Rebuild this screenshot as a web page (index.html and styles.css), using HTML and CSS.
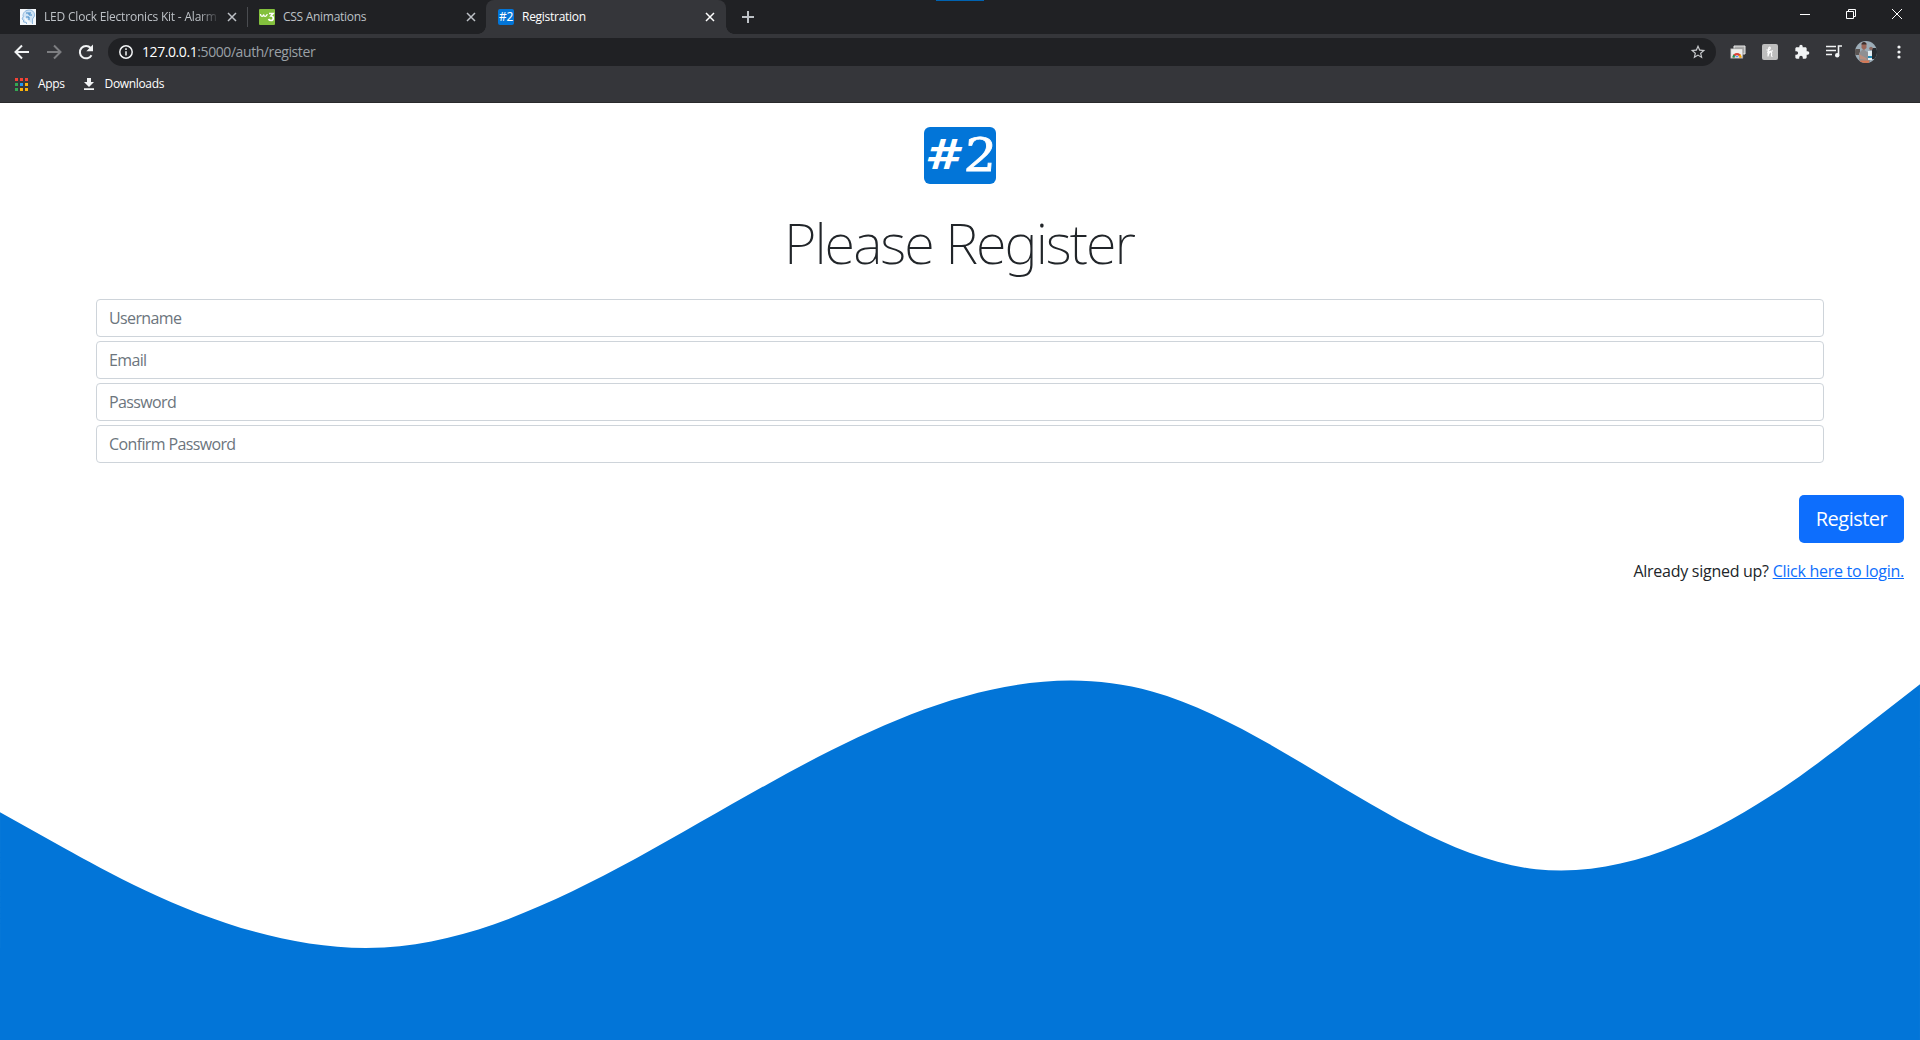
FILE: index.html
```html
<!DOCTYPE html>
<html lang="en">
<head>
<meta charset="utf-8">
<title>Registration</title>
<link rel="stylesheet" href="styles.css">
</head>
<body>
<header class="browser">
  <div class="tabstrip">
    <div class="tab tab-first">
      <svg class="favicon" viewBox="0 0 16 16"><rect width="16" height="16" fill="#f4f8fc"/><path d="M3 7c0-4 3-6 6.500-6S15 4 14.500 7l-2 3v5M3.500 7l-1.500 3 1.500 1v2l3 .5V15" fill="#cfe3f5" stroke="#8fb8de"/><path d="M6 4h3v2h3M6 8h3v3M10 3v2" fill="none" stroke="#3f87c5"/></svg>
      <span class="tab-title fade">LED Clock Electronics Kit - Alarm</span>
      <svg class="close" viewBox="0 0 10 10"><path d="M1 1l8 8M9 1l-8 8"/></svg>
    </div>
    <i class="separator"></i>
    <div class="tab tab-second">
      <svg class="favicon" viewBox="0 0 16 16"><rect width="16" height="16" rx="1" fill="#83c03d"/><path d="M1.500 5c0 3 2.700 3 3.200.5 0 2.500 3 2.500 3.500-.5" fill="none" stroke="#fff" stroke-width="1.300"/><path d="M10 4.500h4L12 7c3 0 3 4.500 0 4.500-1 0-2-.5-2.500-1.500" fill="none" stroke="#fff" stroke-width="1.700"/></svg>
      <span class="tab-title">CSS Animations</span>
      <svg class="close" viewBox="0 0 10 10"><path d="M1 1l8 8M9 1l-8 8"/></svg>
    </div>
    <div class="tab tab-active">
      <span class="favicon brand-icon">#2</span>
      <span class="tab-title">Registration</span>
      <svg class="close" viewBox="0 0 10 10"><path d="M1 1l8 8M9 1l-8 8"/></svg>
    </div>
    <svg class="new-tab" viewBox="0 0 12 12"><path d="M6 0v12M0 6h12"/></svg>
    <div class="window-controls">
      <svg viewBox="0 0 10 10"><path d="M0 5.500h10"/></svg>
      <svg viewBox="0 0 10 10"><path d="M.5 2.500h7v7h-7zM2.500 2.500v-2h7v7h-2"/></svg>
      <svg viewBox="0 0 10 10"><path d="M0 0l10 10M10 0L0 10"/></svg>
    </div>
  </div>
  <div class="toolbar">
    <svg class="nav" viewBox="0 0 16 16"><path d="M15 8H2M8 1.500L1.500 8 8 14.500"/></svg>
    <svg class="nav disabled" viewBox="0 0 16 16"><path d="M1 8h13M8 1.500L14.500 8 8 14.500"/></svg>
    <svg class="nav" viewBox="0 0 16 16"><path d="M13.500 11.200A6.200 6.200 0 1 1 12.700 4"/><path class="solid" d="M15 .5v6.700H8.300z"/></svg>
    <div class="omnibox">
      <svg class="info" viewBox="0 0 14 14"><circle cx="7" cy="7" r="6.200"/><path d="M7 6.200v4.300M7 3.300v1.600"/></svg>
      <span class="url"><b>127.0.0.1</b>:5000/auth/register</span>
      <svg class="star" viewBox="1 1 22 22"><path d="M22 9.240l-7.190-.62L12 2 9.190 8.630 2 9.240l5.460 4.730L5.820 21 12 17.270 18.180 21l-1.630-7.030L22 9.240zM12 15.400l-3.760 2.270 1-4.280-3.320-2.880 4.380-.38L12 6.100l1.710 4.040 4.380.38-3.320 2.880 1 4.280L12 15.400z"/></svg>
    </div>
    <div class="extensions">
      <svg class="ext" viewBox="0 0 16 16"><path d="M4 2h11v8H4z" fill="#aaa" stroke="#e8e8e8"/><path d="M.7 4.700h12.100v9.600H.7z" fill="#eeeeec" stroke="#888" stroke-width=".6"/><path d="M2.500 13.500a4.500 4.500 0 0 1 9 0z" fill="#db4437"/><path d="M2.500 13.500a4.500 4.500 0 0 1 1-3l3.500 3z" fill="#0f9d58"/><path d="M11.500 13.500a4.500 4.500 0 0 0-1-3L7 13.500z" fill="#f4b400"/><path d="M5 13.500a2 2 0 0 1 4 0z" fill="#4285f4" stroke="#fff" stroke-width=".6"/></svg>
      <svg class="ext" viewBox="0 0 16 16"><rect width="16" height="16" rx="2" fill="#bdbdbd"/><path d="M4.500 5.800C7.500 6.500 9 4.500 8 3.200 6.500 2.500 6.200 6 6 12.500c.5-4.500 3.500-5.500 3.700-3.300 0 1.500-.8 3.500.8 3.300M5 8.200l6-1.400" fill="none" stroke="#fff" stroke-width="1.100"/></svg>
      <svg class="ext puzzle" viewBox="0 0 24 24"><path d="M20.500 11H19V7c0-1.100-.9-2-2-2h-4V3.500a2.500 2.500 0 0 0-5 0V5H4c-1.100 0-1.990.9-1.990 2v3.800H3.500a2.700 2.700 0 0 1 0 5.400H2V20c0 1.100.9 2 2 2h3.800v-1.500a2.700 2.700 0 0 1 5.400 0V22H17c1.100 0 2-.9 2-2v-4h1.500a2.500 2.500 0 0 0 0-5z"/></svg>
      <svg class="ext media" viewBox="0 0 16 16"><path d="M0 2.500h10M0 6.500h10M0 10.500h6M16 2h-3.500v9" fill="none" stroke="#f1f3f4" stroke-width="1.600"/><circle cx="11.200" cy="11.200" r="2.200" fill="#f1f3f4"/></svg>
      <svg class="avatar" viewBox="0 0 22 22"><defs><clipPath id="round"><circle cx="11" cy="11" r="11"/></clipPath></defs><g clip-path="url(#round)"><path d="M0 0h22v22H0z" fill="#9dadb8"/><path d="M0 8h5v6H0z" fill="#5a5452"/><path d="M17 7h5v11h-5z" fill="#272b30"/><path d="M4 22V12l4-4 7 5v9z" fill="#8f9093"/><path d="M6.500 3c0-2.500 5-2.500 5 0v4L9 9 6.500 7z" fill="#9b6658"/><path d="M6.500 3.500c0-3.500 5-3.500 5 0z" fill="#3b302f"/><path d="M4 13l7 4 1 2-7-1z" fill="#b98f80"/><path d="M13 10h4v9h-4z" fill="#e2edf2"/><path d="M13 15h4v2h-4z" fill="#278bb5"/><circle cx="16" cy="7.500" r="1.800" fill="#8d6961"/><path d="M5 19.500h9V22H5z" fill="#d67854"/></g></svg>
      <svg class="menu" viewBox="0 0 4 14"><circle cx="2" cy="2" r="1.600"/><circle cx="2" cy="7" r="1.600"/><circle cx="2" cy="12" r="1.600"/></svg>
    </div>
  </div>
  <nav class="bookmarks">
    <svg class="apps" viewBox="0 0 13 13"><path d="M0 0h3v3H0zM5 0h3v3H5zM10 0h3v3h-3z" fill="#f44336"/><path d="M0 5h3v3H0zM0 10h3v3H0z" fill="#34a853"/><path d="M5 5h3v3H5z" fill="#2196f3"/><path d="M10 5h3v3h-3zM5 10h3v3H5zM10 10h3v3h-3z" fill="#fbb30b"/></svg>
    <span class="apps-label">Apps</span>
    <svg class="download" viewBox="0 0 10 12"><path d="M3 0h4v4h3L5 9 0 4h3zM0 10.300h10V12H0z"/></svg>
    <span class="downloads-label">Downloads</span>
  </nav>
  <i class="top-mark"></i>
</header>
<main class="page">
  <form class="form">
    <div class="logo"><span class="hash">#</span><span class="two">2</span></div>
    <h1>Please Register</h1>
    <div class="fields">
      <input type="text" placeholder="Username">
      <input type="text" placeholder="Email">
      <input type="password" placeholder="Password">
      <input type="password" placeholder="Confirm Password">
    </div>
    <div class="actions">
      <button type="button">Register</button>
      <p><span class="prompt">Already signed up?</span> <a href="#">Click here to login.</a></p>
    </div>
  </form>
  <svg class="wave" viewBox="0 0 1440 330.500"><path d="M0,160L48,186.670C96,213.330,192,266.670,288,261.330C384,256,480,192,576,138.670C672,85.330,768,42.670,864,69.330C960,96,1056,192,1152,202.670C1248,213.330,1344,138.670,1392,101.330L1440,64V331H0Z"/></svg>
</main>
</body>
</html>
```
FILE: styles.css
```css
* { box-sizing: border-box; }
body {
  margin: 0;
  width: 1920px;
  height: 1040px;
  overflow: hidden;
  display: flex;
  flex-direction: column;
  background: #fff;
  color: #212529;
  font-family: "Open Sans", "Noto Sans", sans-serif;
}
svg { display: block; flex: none; }

.browser {
  position: relative;
  height: 103px;
  background: #35363a;
  border-bottom: 1px solid #29292b;
  color: #fff;
  font-size: 12px;
  flex: none;
}
.top-mark { position: absolute; left: 936px; top: 0; width: 48px; height: 1px; background: #0063b1; }
.tabstrip { display: flex; height: 34px; background: #202124; }
.tab { display: flex; align-items: center; height: 34px; color: #bdc1c6; white-space: nowrap; }
.tab-first { width: 247px; padding-left: 20px; }
.tab-second { width: 238px; padding-left: 11px; }
.tab-active {
  position: relative;
  width: 240px;
  padding-left: 12px;
  background: #35363a;
  border-radius: 8px 8px 0 0;
  color: #fff;
}
.tab-active::before, .tab-active::after {
  content: "";
  position: absolute;
  bottom: 0;
  width: 8px;
  height: 8px;
}
.tab-active::before { left: -8px; background: radial-gradient(circle at 0 0, transparent 7.500px, #35363a 8px); }
.tab-active::after { right: -8px; background: radial-gradient(circle at 100% 0, transparent 7.500px, #35363a 8px); }
.separator { width: 1px; height: 20px; margin-top: 7px; background: #4a4c50; }
.favicon { width: 16px; height: 16px; margin-right: 8px; }
.brand-icon {
  background: #0275d8;
  border-radius: 2px;
  color: #fff;
  font: 12px/16px "Noto Sans", sans-serif;
  text-align: center;
  letter-spacing: -0.3px;
}
.tab-title { flex: 1; font-size: 12px; padding-bottom: 2px; letter-spacing: -0.28px; }
.fade {
  flex: none;
  width: 174px;
  letter-spacing: -0.2px;
  -webkit-mask-image: linear-gradient(90deg, #000 155px, transparent 176px);
  mask-image: linear-gradient(90deg, #000 155px, transparent 176px);
}
.close { width: 10px; height: 10px; fill: none; stroke: currentColor; stroke-width: 1.500; }
.tab-first .close { margin-left: 9px; }
.tab-second .close { margin-right: 10px; }
.tab-active .close { margin-right: 11px; }
.new-tab { width: 12px; height: 12px; margin: 11px 0 0 16px; fill: none; stroke: #bdc1c6; stroke-width: 2; }
.window-controls { display: flex; gap: 36px; margin: 9px 18px 0 auto; }
.window-controls svg { width: 10px; height: 10px; fill: none; stroke: #fff; stroke-width: 1; overflow: visible; }

.toolbar { display: flex; align-items: center; height: 36px; padding-left: 14px; }
.nav { width: 16px; height: 16px; margin-right: 16px; fill: none; stroke: #f1f3f4; stroke-width: 2; }
.nav .solid { fill: #f1f3f4; stroke: none; }
.disabled { stroke: #7d7e81; }
.omnibox {
  display: flex;
  align-items: center;
  width: 1608px;
  height: 28px;
  margin-left: -2px;
  padding: 0 10px 0 11px;
  border-radius: 14px;
  background: #202124;
}
.info { width: 14px; height: 14px; margin-right: 9px; fill: none; stroke: #f1f3f4; stroke-width: 1.500; }
.url { flex: 1; font-size: 14px; color: #9aa0a6; letter-spacing: -0.42px; padding-bottom: 1px; }
.url b { font-weight: 400; color: #fff; }
.star { width: 16px; height: 16px; fill: #c8cacd; }
.extensions { display: flex; align-items: center; margin-left: 14px; }
.ext { width: 16px; height: 16px; margin-right: 16px; }
.puzzle { fill: #f1f3f4; }
.media { margin-right: 13px; }
.avatar { width: 22px; height: 22px; margin-right: 20px; }
.menu { width: 4px; height: 14px; fill: #f1f3f4; }

.bookmarks { display: flex; align-items: center; height: 28px; padding-left: 15px; }
.apps { width: 13px; height: 13px; margin-right: 10px; }
.download { width: 10px; height: 12px; margin: 0 11px 0 19px; fill: #f1f3f4; }
.apps-label, .downloads-label { letter-spacing: -0.35px; padding-bottom: 1px; }

.page { display: flex; flex-direction: column; justify-content: space-between; flex: 1; }
.form { display: flex; flex-direction: column; align-items: stretch; padding: 24px 16px 0; }
.logo {
  display: flex;
  justify-content: center;
  align-items: center;
  align-self: center;
  width: 72px;
  height: 57px;
  border-radius: 6px;
  background: #0275d8;
  color: #fff;
}
.hash { font: italic 700 41px/57px "DejaVu Sans", sans-serif; transform: translateX(-4px) scaleX(1.18); }
.two { font: 400 46px/57px "DejaVu Serif", serif; -webkit-text-stroke: 0.8px #fff; transform: translateX(6px) scaleX(1.1) skewX(-4deg); }
h1 {
  margin: 25px 0 0;
  height: 67px;
  font: 200 56px/67px "Noto Sans", "Open Sans", sans-serif;
  text-align: center;
  letter-spacing: -2px;
  text-indent: -2px;
}
.fields { display: flex; flex-direction: column; gap: 4px; margin: 23px 80px 0; }
input {
  display: block;
  width: 100%;
  height: 38px;
  padding: 6px 12px;
  border: 1px solid #ced4da;
  border-radius: 4px;
  background: #fff;
  font: 16px/24px "Open Sans", sans-serif;
  letter-spacing: -0.63px;
}
input::placeholder { color: #6c757d; opacity: 1; }
.actions { display: flex; flex-direction: column; align-items: flex-end; margin-top: 32px; }
button {
  width: 105px;
  height: 48px;
  padding: 0;
  border: 0;
  border-radius: 5px;
  background: #0d6efd;
  color: #fff;
  font: 20px/30px "Open Sans", sans-serif;
  letter-spacing: -0.5px;
}
p { margin: 16px 0 0; font-size: 16px; line-height: 24px; letter-spacing: -0.27px; }
a { color: #0d6efd; text-decoration: underline; }
.wave { width: 1920px; height: 440.670px; fill: #0275d8; }
```
